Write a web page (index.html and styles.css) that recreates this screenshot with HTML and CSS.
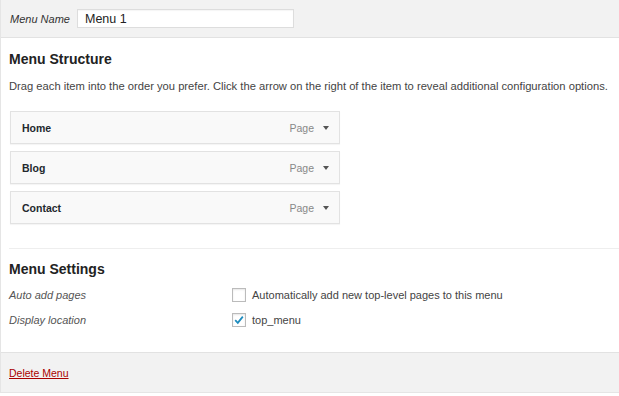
FILE: index.html
```html
<!DOCTYPE html>
<html lang="en">

<head>
  <meta charset="UTF-8">
  <title>Menus</title>
  <link rel="stylesheet" href="styles.css">
</head>

<body>
  <div class="menu-edit">
    <div class="menu-header">
      <label class="menu-name-label" for="menu-name">Menu Name</label>
      <input class="menu-name-input" type="text" id="menu-name" value="Menu 1">
    </div>

    <div class="menu-body">
      <h3>Menu Structure</h3>
      <p class="desc">Drag each item into the order you prefer. Click the arrow on the right of the item to reveal additional configuration options.</p>

      <ul class="menu-items">
        <li class="menu-item">
          <span class="item-title">Home</span>
          <span class="item-type">Page</span>
          <span class="item-arrow"></span>
        </li>
        <li class="menu-item">
          <span class="item-title">Blog</span>
          <span class="item-type">Page</span>
          <span class="item-arrow"></span>
        </li>
        <li class="menu-item">
          <span class="item-title">Contact</span>
          <span class="item-type">Page</span>
          <span class="item-arrow"></span>
        </li>
      </ul>

      <div class="menu-settings">
        <h3>Menu Settings</h3>
        <div class="setting-row">
          <div class="setting-label">Auto add pages</div>
          <label class="setting-input"><span class="check"></span>Automatically add new top-level pages to this menu</label>
        </div>
        <div class="setting-row">
          <div class="setting-label">Display location</div>
          <label class="setting-input">
            <span class="check">
              <svg width="12" height="12" viewBox="0 0 12 12"><path d="M2.2 6.2 L4.8 8.8 L9.8 2.6" fill="none" stroke="#1e8cbe" stroke-width="1.8"/></svg>
            </span>top_menu</label>
        </div>
      </div>
    </div>

    <div class="menu-footer">
      <a class="delete-link" href="#">Delete Menu</a>
    </div>
  </div>
</body>

</html>
```

FILE: styles.css
```css
body {
  margin: 0;
  font-family: 'Liberation Sans', arial, sans-serif;
  font-size: 11px;
  color: #444;
  background: #fff;
}

.menu-edit {
  border-left: 1px solid #e5e5e5;
  border-bottom: 1px solid #e5e5e5;
}

.menu-header {
  display: flex;
  align-items: center;
  height: 37px;
  padding-left: 9px;
  background-color: #f2f2f2;
  border-bottom: 1px solid #e2e2e2;
}

.menu-name-label {
  font-style: italic;
  color: #333;
  width: 67px;
}

.menu-name-input {
  width: 217px;
  height: 19px;
  box-sizing: border-box;
  border: 1px solid #ddd;
  padding: 0 7px;
  font-family: inherit;
  font-size: 12.5px;
  color: #222;
  box-shadow: inset 0 1px 1px rgba(0, 0, 0, .04);
}

.menu-body {
  padding: 13px 0 20px 8px;
}

h3 {
  margin: 0;
  font-size: 14px;
  font-weight: bold;
  color: #222;
}

.desc {
  margin: 13px 0 0;
  font-size: 11.2px;
  color: #444;
}

.menu-items {
  list-style: none;
  margin: 19px 0 0;
  padding: 0;
}

.menu-item {
  display: flex;
  align-items: center;
  width: 330px;
  height: 33px;
  box-sizing: border-box;
  margin: 0 0 7px 1px;
  padding: 0 10px 0 11px;
  background: #f9f9f9;
  border: 1px solid #e2e2e2;
  box-shadow: 0 1px 1px rgba(0, 0, 0, .04);
}

.item-title {
  flex: 1;
  font-weight: bold;
  font-size: 10.5px;
  color: #23282d;
}

.item-type {
  color: #888;
  font-size: 10.5px;
  margin-right: 9px;
}

.item-arrow {
  width: 0;
  height: 0;
  border-left: 3px solid transparent;
  border-right: 3px solid transparent;
  border-top: 4px solid #555;
}

.menu-settings {
  margin-top: 24px;
  padding-top: 12px;
  border-top: 1px solid #eee;
}

.menu-settings h3 {
  margin-bottom: 5px;
}

.setting-row {
  display: flex;
  align-items: center;
  height: 25px;
}

.setting-label {
  width: 223px;
  font-style: italic;
  color: #555;
}

.setting-input {
  display: flex;
  align-items: center;
  color: #444;
}

.check {
  display: flex;
  align-items: center;
  justify-content: center;
  width: 14px;
  height: 14px;
  box-sizing: border-box;
  margin-right: 6px;
  border: 1px solid #bbb;
  background: #fff;
  box-shadow: inset 0 1px 2px rgba(0, 0, 0, .1);
}

.menu-footer {
  height: 39px;
  display: flex;
  align-items: center;
  padding-left: 8px;
  background: #f2f2f2;
  border-top: 1px solid #e2e2e2;
}

.delete-link {
  color: #a00;
  font-size: 10.5px;
}
```
